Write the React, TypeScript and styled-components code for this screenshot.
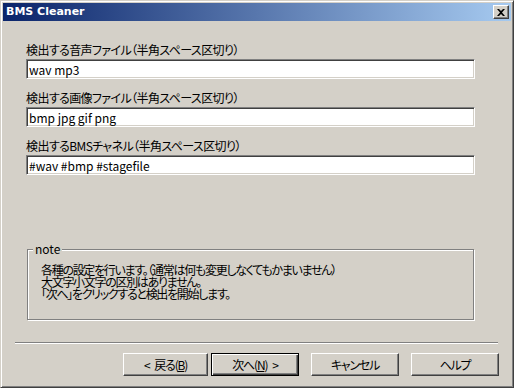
import React from "react";
import styled, { createGlobalStyle } from "styled-components";

const Global = createGlobalStyle`
  html, body { margin: 0; padding: 0; background: #d4d0c8; }
  body { font-family: "Noto Sans CJK JP", sans-serif; }
  * { box-sizing: border-box; }
`;

const JP = `"Noto Sans CJK JP", "Noto Sans", sans-serif`;

const Window = styled.div`
  width: 514px;
  height: 388px;
  background: #d4d0c8;
  border: 1px solid;
  border-color: #d4d0c8 #404040 #404040 #d4d0c8;
  box-shadow: inset 1px 1px 0 #ffffff, inset -1px -1px 0 #808080;
  padding: 2px;
  display: flex;
  flex-direction: column;
`;

const TitleBar = styled.div`
  height: 18px;
  flex: none;
  background: linear-gradient(to right, #0a246a, #a6caf0);
  display: flex;
  align-items: center;
  justify-content: space-between;
  padding: 0 2px 0 3px;
`;

const Title = styled.span`
  color: #ffffff;
  font-family: "DejaVu Sans", sans-serif;
  font-weight: bold;
  font-size: 11px;
  line-height: 18px;
`;

const CloseButton = styled.div`
  width: 16px;
  height: 14px;
  background: #d4d0c8;
  border: 1px solid;
  border-color: #ffffff #404040 #404040 #ffffff;
  box-shadow: inset -1px -1px 0 #808080;
  display: flex;
  align-items: center;
  justify-content: center;
`;

const Body = styled.div`
  flex: 1;
  display: flex;
  flex-direction: column;
`;

const Fields = styled.div`
  display: flex;
  flex-direction: column;
  gap: 11px;
  padding: 21px 36px 0 23px;
`;

const Field = styled.div`
  display: flex;
  flex-direction: column;
`;

const Label = styled.label`
  font-family: ${JP};
  font-size: 12px;
  line-height: 16px;
  height: 16px;
  margin-bottom: 1px;
  color: #000;
  letter-spacing: -0.6px;
  font-feature-settings: "palt";
  white-space: nowrap;
`;

const TextBox = styled.input`
  width: 100%;
  height: 20px;
  margin: 0;
  padding: 0 2px;
  background: #ffffff;
  border: 1px solid;
  border-color: #808080 #ffffff #ffffff #808080;
  box-shadow: inset 1px 1px 0 #404040, inset -1px -1px 0 #d4d0c8;
  font-family: ${JP};
  font-size: 12px;
  color: #000;
  outline: none;
`;

const NoteBox = styled.fieldset`
  margin: 67px 37px 0 24px;
  padding: 8px 10px 0 13px;
  height: 78px;
  border: 1px solid #808080;
  box-shadow: inset 1px 1px 0 #ffffff, 1px 1px 0 #ffffff;
  min-width: 0;
`;

const NoteLegend = styled.legend`
  margin-left: -8px;
  padding: 0 2px;
  background: #d4d0c8;
  font-family: ${JP};
  font-size: 12px;
  line-height: 14px;
  color: #000;
`;

const NoteText = styled.p`
  margin: 0;
  font-family: ${JP};
  font-size: 12px;
  line-height: 12px;
  color: #000;
  letter-spacing: -1.3px;
  font-feature-settings: "palt";
  white-space: nowrap;
`;

const Footer = styled.div`
  margin-top: auto;
  display: flex;
  flex-direction: column;
`;

const Separator = styled.div`
  height: 2px;
  margin: 0 13px 0 12px;
  border-top: 1px solid #808080;
  border-bottom: 1px solid #ffffff;
`;

const ButtonRow = styled.div`
  display: flex;
  justify-content: flex-end;
  gap: 12px;
  padding: 9px 12px 9px 0;
`;

const NavGroup = styled.div`
  display: flex;
  gap: 3px;
`;

const Button = styled.button<{ $default?: boolean; $w?: number }>`
  width: ${(p) => p.$w ?? 88}px;
  height: 23px;
  margin: 0;
  padding: 0;
  background: #d4d0c8;
  font-family: ${JP};
  font-size: 12px;
  color: #000;
  letter-spacing: -1.2px;
  font-feature-settings: "palt";
  white-space: nowrap;
  display: flex;
  align-items: center;
  justify-content: center;
  border: 1px solid;
  border-color: ${(p) => (p.$default ? "#000000" : "#ffffff #404040 #404040 #ffffff")};
  box-shadow: ${(p) =>
    p.$default
      ? "inset 1px 1px 0 #ffffff, inset -1px -1px 0 #404040, inset -2px -2px 0 #808080"
      : "inset -1px -1px 0 #808080"};
`;

const Arrow = styled.span<{ $side: "left" | "right" }>`
  margin: ${(p) => (p.$side === "left" ? "0 5px 0 0" : "0 0 0 5px")};
`;

const Key = styled.span`
  text-decoration: underline;
  text-underline-offset: 1px;
`;

export default function App() {
  return (
    <>
      <Global />
      <Window>
        <TitleBar>
          <Title>BMS Cleaner</Title>
          <CloseButton>
            <svg width="8" height="7" viewBox="0 0 8 7">
              <path d="M0 0h2l2 2 2-2h2L5 3.5 8 7H6L4 5 2 7H0l3-3.5z" fill="#000" />
            </svg>
          </CloseButton>
        </TitleBar>
        <Body>
          <Fields>
            <Field>
              <Label>検出する音声ファイル（半角スペース区切り）</Label>
              <TextBox readOnly value="wav mp3" />
            </Field>
            <Field>
              <Label>検出する画像ファイル（半角スペース区切り）</Label>
              <TextBox readOnly value="bmp jpg gif png" />
            </Field>
            <Field>
              <Label>検出するBMSチャネル（半角スペース区切り）</Label>
              <TextBox readOnly value="#wav #bmp #stagefile" />
            </Field>
          </Fields>
          <NoteBox>
            <NoteLegend>note</NoteLegend>
            <NoteText>各種の設定を行います。（通常は何も変更しなくてもかまいません）</NoteText>
            <NoteText>大文字小文字の区別はありません。</NoteText>
            <NoteText>「次へ」をクリックすると検出を開始します。</NoteText>
          </NoteBox>
          <Footer>
            <Separator />
            <ButtonRow>
              <NavGroup>
                <Button $w={85}>
                  <Arrow $side="left">&lt;</Arrow>
                  戻る(<Key>B</Key>)
                </Button>
                <Button $default>
                  次へ(<Key>N</Key>)
                  <Arrow $side="right">&gt;</Arrow>
                </Button>
              </NavGroup>
              <Button>キャンセル</Button>
              <Button>ヘルプ</Button>
            </ButtonRow>
          </Footer>
        </Body>
      </Window>
    </>
  );
}
